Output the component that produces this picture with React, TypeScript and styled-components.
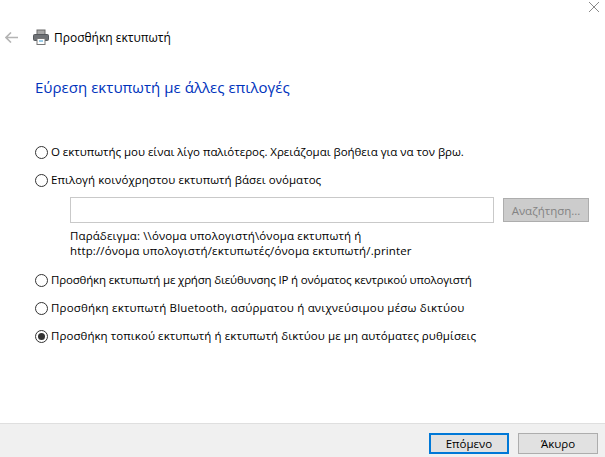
import React from "react";
import styled, { createGlobalStyle } from "styled-components";

const GlobalStyle = createGlobalStyle`
  html, body {
    margin: 0;
    padding: 0;
    background: #fff;
  }
  body {
    font-family: "Open Sans", "Noto Sans", "Liberation Sans", sans-serif;
    font-size: 12px;
    color: #000;
  }
`;

const Window = styled.div`
  width: 605px;
  height: 457px;
  display: flex;
  flex-direction: column;
  overflow: hidden;
`;

const CloseBar = styled.div`
  height: 14px;
  display: flex;
  justify-content: flex-end;
  padding: 2px 6px 0 0;
  flex-shrink: 0;
`;

const TitleRow = styled.div`
  display: flex;
  align-items: center;
  height: 20px;
  margin-top: 11px;
  padding-left: 5px;
`;

const BackIcon = styled.svg`
  width: 13px;
  height: 11px;
  margin-right: 15px;
`;

const PrinterIcon = styled.svg`
  width: 16px;
  height: 16px;
  margin-right: 5px;
`;

const TitleText = styled.span`
  font-size: 12px;
`;

const Content = styled.div`
  flex: 1;
  padding: 0 0 0 35px;
  display: flex;
  flex-direction: column;
`;

const Heading = styled.h1`
  margin: 30px 0 0;
  font-size: 15px;
  line-height: 20px;
  font-weight: 400;
  color: #0033bc;
  letter-spacing: 0.03px;
`;

const Options = styled.div`
  margin-top: 47px;
  display: flex;
  flex-direction: column;
`;

const OptionRow = styled.label<{ $gap: number; $tracking: number }>`
  display: flex;
  align-items: center;
  height: 16px;
  margin-bottom: ${(p) => p.$gap}px;
  white-space: nowrap;
  font-size: 11.5px;
  letter-spacing: ${(p) => p.$tracking}px;
`;

const OptionText = styled.span`
  margin-bottom: 2px;
`;

const Radio = styled.span<{ $checked?: boolean }>`
  width: 13px;
  height: 13px;
  box-sizing: border-box;
  border: 1px solid #333;
  border-radius: 50%;
  margin-right: 3px;
  flex-shrink: 0;
  display: flex;
  align-items: center;
  justify-content: center;
  &::after {
    content: "";
    width: 7px;
    height: 7px;
    border-radius: 50%;
    background: ${(p) => (p.$checked ? "#333" : "transparent")};
  }
`;

const SearchBlock = styled.div`
  padding-left: 35px;
  margin-bottom: 14px;
`;

const SearchRow = styled.div`
  display: flex;
  align-items: center;
`;

const SearchInput = styled.div`
  width: 424px;
  height: 26px;
  box-sizing: border-box;
  border: 1px solid #c9c9c9;
  background: #fff;
`;

const SearchButton = styled.div`
  width: 86px;
  height: 24px;
  box-sizing: border-box;
  margin-left: 9px;
  border: 1px solid #adadad;
  background: #cccccc;
  color: #838383;
  font-size: 11.5px;
  display: flex;
  align-items: center;
  justify-content: center;
`;

const Example = styled.div`
  margin-top: 5px;
  font-size: 11.5px;
  line-height: 15px;
  letter-spacing: 0.13px;
  white-space: nowrap;
`;

const Footer = styled.div`
  height: 34px;
  flex-shrink: 0;
  margin-top: auto;
  box-sizing: border-box;
  border-top: 1px solid #dfdfdf;
  background: #f0f0f0;
  display: flex;
  align-items: flex-start;
  justify-content: flex-end;
  gap: 9px;
  padding: 9px 7px 0 0;
`;

const FooterButton = styled.div<{ $primary?: boolean }>`
  width: 80px;
  height: 21px;
  box-sizing: border-box;
  border: ${(p) => (p.$primary ? "2px solid #0078d7" : "1px solid #adadad")};
  background: #e1e1e1;
  font-size: 11.5px;
  display: flex;
  align-items: center;
  justify-content: center;
`;

export default function App() {
  return (
    <Window>
      <GlobalStyle />
      <CloseBar>
        <svg width="10" height="10" viewBox="0 0 10 10">
          <path d="M0 0L10 10M10 0L0 10" stroke="#8a8a8a" strokeWidth="1" fill="none" />
        </svg>
      </CloseBar>
      <TitleRow>
        <BackIcon viewBox="0 0 13 11">
          <path d="M6 .5L1 5.5L6 10.5M1 5.5H13" stroke="#b4b4b4" strokeWidth="1.6" fill="none" />
        </BackIcon>
        <PrinterIcon viewBox="0 0 16 16">
          <rect x="4" y="1" width="8" height="5" fill="#a8a8a8" stroke="#6a6a6a" />
          <rect x="0.5" y="5.5" width="15" height="6" rx="1" fill="#6f7276" stroke="#55585c" />
          <rect x="4" y="9.5" width="8" height="6" fill="#fff" stroke="#777" />
          <path d="M6 12h4" stroke="#3a9bd0" />
        </PrinterIcon>
        <TitleText>Προσθήκη εκτυπωτή</TitleText>
      </TitleRow>
      <Content>
        <Heading>Εύρεση εκτυπωτή με άλλες επιλογές</Heading>
        <Options>
          <OptionRow $gap={12} $tracking={-0.03}>
            <Radio />
            <OptionText>Ο εκτυπωτής μου είναι λίγο παλιότερος. Χρειάζομαι βοήθεια για να τον βρω.</OptionText>
          </OptionRow>
          <OptionRow $gap={9} $tracking={0.05}>
            <Radio />
            <OptionText>Επιλογή κοινόχρηστου εκτυπωτή βάσει ονόματος</OptionText>
          </OptionRow>
          <SearchBlock>
            <SearchRow>
              <SearchInput />
              <SearchButton>Αναζήτηση...</SearchButton>
            </SearchRow>
            <Example>
              Παράδειγμα: \\όνομα υπολογιστή\όνομα εκτυπωτή ή
              <br />
              http://όνομα υπολογιστή/εκτυπωτές/όνομα εκτυπωτή/.printer
            </Example>
          </SearchBlock>
          <OptionRow $gap={12} $tracking={-0.17}>
            <Radio />
            <OptionText>Προσθήκη εκτυπωτή με χρήση διεύθυνσης IP ή ονόματος κεντρικού υπολογιστή</OptionText>
          </OptionRow>
          <OptionRow $gap={12} $tracking={0.2}>
            <Radio />
            <OptionText>Προσθήκη εκτυπωτή Bluetooth, ασύρματου ή ανιχνεύσιμου μέσω δικτύου</OptionText>
          </OptionRow>
          <OptionRow $gap={0} $tracking={0.07}>
            <Radio $checked />
            <OptionText>Προσθήκη τοπικού εκτυπωτή ή εκτυπωτή δικτύου με μη αυτόματες ρυθμίσεις</OptionText>
          </OptionRow>
        </Options>
      </Content>
      <Footer>
        <FooterButton $primary>Επόμενο</FooterButton>
        <FooterButton>Άκυρο</FooterButton>
      </Footer>
    </Window>
  );
}
